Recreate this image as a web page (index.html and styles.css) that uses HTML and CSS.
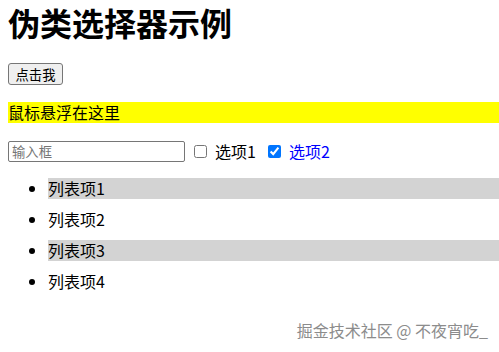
FILE: index.html
```html
<!DOCTYPE html>
<html lang="zh-CN">
<head>
    <meta charset="UTF-8">
    <meta name="viewport" content="width=device-width, initial-scale=1.0">
    <title>伪类选择器示例</title>
    <link rel="stylesheet" href="styles.css">
</head>
<body>
    <h1>伪类选择器示例</h1>

    <div class="actions">
        <button class="btn">点击我</button>
    </div>

    <p class="hover-box">鼠标悬浮在这里</p>

    <div class="form-row">
        <input type="text" class="text-input" placeholder="输入框">
        <input type="checkbox" id="opt1" class="check">
        <label for="opt1">选项1</label>
        <input type="checkbox" id="opt2" class="check" checked>
        <label for="opt2">选项2</label>
    </div>

    <ul class="list">
        <li>列表项1</li>
        <li>列表项2</li>
        <li>列表项3</li>
        <li>列表项4</li>
    </ul>

    <div class="watermark">掘金技术社区 @ 不夜宵吃_</div>
</body>
</html>
```

FILE: styles.css
```css
body {
    font-family: "Noto Sans CJK SC", "Liberation Sans", sans-serif;
    font-size: 16px;
    line-height: 21px;
    color: #000;
    margin: 0 0 0 8px;
    overflow: hidden;
}

h1 {
    font-size: 32px;
    line-height: 37px;
    font-weight: bold;
    margin: 4px 0 22px;
}

.actions {
    display: flex;
    margin-bottom: 17px;
}

.btn {
    font-family: "Noto Sans CJK SC", sans-serif;
    font-size: 13.33px;
    height: 22px;
    width: 55px;
    padding: 0 6px;
    background: #efefef;
    border: 1px solid #767676;
    border-radius: 3px;
    color: #000;
}

.hover-box {
    background: yellow;
    margin: 0 0 18px;
    line-height: 21px;
}

.form-row {
    display: flex;
    align-items: center;
    margin-bottom: 16px;
}

.text-input {
    box-sizing: border-box;
    width: 177px;
    height: 21px;
    margin: 0;
    padding: 1px 3px;
    font-family: "Noto Sans CJK SC", sans-serif;
    font-size: 13.33px;
    border: 1px solid #767676;
    border-radius: 2px;
}

.text-input::placeholder {
    color: #757575;
}

.check {
    width: 13px;
    height: 13px;
    margin: 0 8px 0 9px;
    accent-color: #0075ff;
}

.check + label + .check {
    margin-left: 12px;
}

.check:checked + label {
    color: blue;
}

.list {
    margin: 0;
    padding-left: 40px;
}

.list li {
    line-height: 21px;
    margin-bottom: 10px;
}

.list li:nth-child(odd) {
    background: lightgray;
}

.watermark {
    position: absolute;
    right: 11px;
    bottom: 11px;
    font-size: 16px;
    color: #8c8c8c;
    text-shadow: 0 0 2px #fff;
}
```
